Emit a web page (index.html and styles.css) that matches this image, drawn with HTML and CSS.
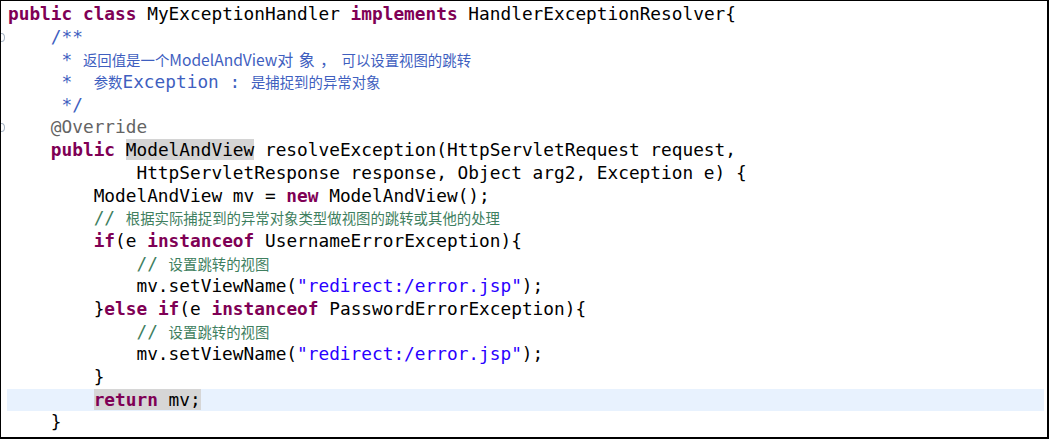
FILE: index.html
```html
<!DOCTYPE html>
<html lang="zh-CN">
<head>
    <meta charset="UTF-8">
    <title>MyExceptionHandler.java</title>
    <link rel="stylesheet" href="styles.css">
</head>
<body>
    <div class="editor">
        <div class="line"><span class="gutter"></span><span class="code"><b class="kw">public</b> <b class="kw">class</b> MyExceptionHandler <b class="kw">implements</b> HandlerExceptionResolver{</span></div>
        <div class="line"><span class="gutter fold"></span><span class="code">    <span class="doc">/**</span></span></div>
        <div class="line"><span class="gutter"></span><span class="code"><span class="doc">     * <span class="cjk">返回值是一个<span class="cjk-latin">ModelAndView</span><span class="wide">对象，</span>可以设置视图的跳转</span></span></span></div>
        <div class="line"><span class="gutter"></span><span class="code"><span class="doc">     *  <span class="cjk">参数</span>Exception : <span class="cjk">是捕捉到的异常对象</span></span></span></div>
        <div class="line"><span class="gutter"></span><span class="code"><span class="doc">     */</span></span></div>
        <div class="line"><span class="gutter fold"></span><span class="code">    <span class="anno">@Override</span></span></div>
        <div class="line"><span class="gutter"></span><span class="code">    <b class="kw">public</b> <span class="occurrence">ModelAndView</span> resolveException(HttpServletRequest request,</span></div>
        <div class="line"><span class="gutter"></span><span class="code">            HttpServletResponse response, Object arg2, Exception e) {</span></div>
        <div class="line"><span class="gutter"></span><span class="code">        ModelAndView mv = <b class="kw">new</b> ModelAndView();</span></div>
        <div class="line"><span class="gutter"></span><span class="code">        <span class="comment">// <span class="cjk">根据实际捕捉到的异常对象类型做视图的跳转或其他的处理</span></span></span></div>
        <div class="line"><span class="gutter"></span><span class="code">        <b class="kw">if</b>(e <b class="kw">instanceof</b> UsernameErrorException){</span></div>
        <div class="line"><span class="gutter"></span><span class="code">            <span class="comment">// <span class="cjk">设置跳转的视图</span></span></span></div>
        <div class="line"><span class="gutter"></span><span class="code">            mv.setViewName(<span class="str">"redirect:/error.jsp"</span>);</span></div>
        <div class="line"><span class="gutter"></span><span class="code">        }<b class="kw">else</b> <b class="kw">if</b>(e <b class="kw">instanceof</b> PasswordErrorException){</span></div>
        <div class="line"><span class="gutter"></span><span class="code">            <span class="comment">// <span class="cjk">设置跳转的视图</span></span></span></div>
        <div class="line"><span class="gutter"></span><span class="code">            mv.setViewName(<span class="str">"redirect:/error.jsp"</span>);</span></div>
        <div class="line"><span class="gutter"></span><span class="code">        }</span></div>
        <div class="line current"><span class="gutter"></span><span class="code">        <span class="selection"><b class="kw">return</b> mv;</span></span></div>
        <div class="line"><span class="gutter"></span><span class="code">    }</span></div>
    </div>
</body>
</html>
```

FILE: styles.css
```css
html, body {
    margin: 0;
    padding: 0;
    background: #fff;
}
.editor {
    box-sizing: border-box;
    width: 1049px;
    height: 439px;
    border-top: 1px solid #000;
    border-left: 1px solid #000;
    border-right: 2px solid #000;
    border-bottom: 2px solid #000;
    padding-top: 2px;
    overflow: hidden;
    background: #fff;
    font-family: "DejaVu Sans Mono", "Liberation Mono", monospace;
    font-size: 17.8px;
    color: #000;
}
.line {
    display: flex;
    height: 22.7px;
    line-height: 22.7px;
}
.gutter {
    flex: 0 0 6px;
    display: flex;
    align-items: center;
}
.gutter.fold::before {
    content: "";
    width: 5px;
    height: 7px;
    margin-left: -3px;
    border: 1px solid #a8b4c4;
    border-radius: 50%;
}
.code {
    flex: 1;
    padding-left: 1px;
    margin-right: 3px;
    white-space: pre;
}
.current .code {
    background: #e8f2fe;
}
.kw {
    color: #7f0055;
    font-weight: bold;
}
.doc {
    color: #3f5fbf;
}
.comment {
    color: #3f7f5f;
}
.str {
    color: #2a00ff;
}
.anno {
    color: #646464;
}
.cjk {
    font-family: "Noto Sans CJK SC", sans-serif;
    font-size: 14.4px;
}
.cjk-latin {
    font-size: 15.6px;
}
.wide {
    font-size: 16px;
    letter-spacing: 5.4px;
}
.occurrence {
    background: #d4d4d4;
}
.selection {
    background: #d6d6d6;
}
```
